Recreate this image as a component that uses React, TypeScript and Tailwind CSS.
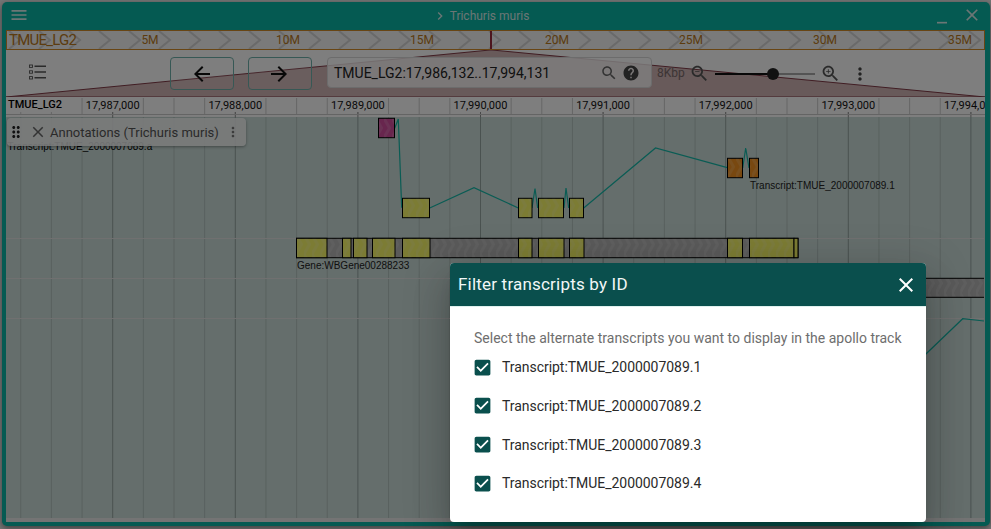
import React from "react";

const P = {
  menu: "M3 18h18v-2H3v2zm0-5h18v-2H3v2zm0-7v2h18V6H3z",
  back: "M20 11H7.83l5.59-5.59L12 4l-8 8 8 8 1.41-1.41L7.83 13H20v-2z",
  forward: "M12 4l-1.41 1.41L16.17 11H4v2h12.17l-5.58 5.59L12 20l8-8z",
  search: "M15.5 14h-.79l-.28-.27C15.41 12.59 16 11.11 16 9.5 16 5.91 13.09 3 9.5 3S3 5.91 3 9.5 5.91 16 9.5 16c1.61 0 3.09-.59 4.23-1.57l.27.28v.79l5 4.99L20.49 19l-4.99-5zm-6 0C7.01 14 5 11.99 5 9.5S7.01 5 9.5 5 14 7.01 14 9.5 11.99 14 9.5 14z",
  help: "M12 2C6.48 2 2 6.48 2 12s4.48 10 10 10 10-4.48 10-10S17.52 2 12 2zm1 17h-2v-2h2v2zm2.07-7.75l-.9.92C13.45 12.9 13 13.5 13 15h-2v-.5c0-1.1.45-2.1 1.17-2.83l1.24-1.26c.37-.36.59-.86.59-1.41 0-1.1-.9-2-2-2s-2 .9-2 2H8c0-2.21 1.79-4 4-4s4 1.79 4 4c0 .88-.36 1.68-.93 2.25z",
  zoomOut: "M15.5 14h-.79l-.28-.27C15.41 12.59 16 11.11 16 9.5 16 5.91 13.09 3 9.5 3S3 5.91 3 9.5 5.91 16 9.5 16c1.61 0 3.09-.59 4.23-1.57l.27.28v.79l5 4.99L20.49 19l-4.99-5zm-6 0C7.01 14 5 11.99 5 9.5S7.01 5 9.5 5 14 7.01 14 9.5 11.99 14 9.5 14zM7 9h5v1H7z",
  zoomIn: "M15.5 14h-.79l-.28-.27C15.41 12.59 16 11.11 16 9.5 16 5.91 13.09 3 9.5 3S3 5.91 3 9.5 5.91 16 9.5 16c1.61 0 3.09-.59 4.23-1.57l.27.28v.79l5 4.99L20.49 19l-4.99-5zm-6 0C7.01 14 5 11.99 5 9.5S7.01 5 9.5 5 14 7.01 14 9.5 11.99 14 9.5 14zM12 10h-2v2H9v-2H7V9h2V7h1v2h2v1z",
  more: "M12 8c1.1 0 2-.9 2-2s-.9-2-2-2-2 .9-2 2 .9 2 2 2zm0 2c-1.1 0-2 .9-2 2s.9 2 2 2 2-.9 2-2-.9-2-2-2zm0 6c-1.1 0-2 .9-2 2s.9 2 2 2 2-.9 2-2-.9-2-2-2z",
  close: "M19 6.41 17.59 5 12 10.59 6.41 5 5 6.41 10.59 12 5 17.59 6.41 19 12 13.41 17.59 19 19 17.59 13.41 12z",
  minimize: "M6 19h12v2H6z",
  chevron: "M8.59 16.59 13.17 12 8.59 7.41 10 6l6 6-6 6z",
  drag: "M11 18c0 1.1-.9 2-2 2s-2-.9-2-2 .9-2 2-2 2 .9 2 2zm-2-8c-1.1 0-2 .9-2 2s.9 2 2 2 2-.9 2-2-.9-2-2-2zm0-6c-1.1 0-2 .9-2 2s.9 2 2 2 2-.9 2-2-.9-2-2-2zm6 4c1.1 0 2-.9 2-2s-.9-2-2-2-2 .9-2 2 .9 2 2 2zm0 2c-1.1 0-2 .9-2 2s.9 2 2 2 2-.9 2-2-.9-2-2-2zm0 6c-1.1 0-2 .9-2 2s.9 2 2 2 2-.9 2-2-.9-2-2-2z",
  check: "M19 3H5c-1.11 0-2 .9-2 2v14c0 1.1.89 2 2 2h14c1.11 0 2-.9 2-2V5c0-1.1-.89-2-2-2zm-9 14l-5-5 1.41-1.41L10 14.17l7.59-7.59L19 8l-9 9z",
};

function Icon({ d, className }: { d: string; className: string }) {
  return (
    <svg viewBox="0 0 24 24" fill="currentColor" className={className}>
      <path d={d} />
    </svg>
  );
}

const TICK0 = 112.7;
const STEP = 122.6;
const majors = Array.from({ length: 8 }, (_, i) => TICK0 + i * STEP);
const allTicks = Array.from({ length: 33 }, (_, i) => TICK0 - STEP + (i * STEP) / 4).filter((x) => x > 6 && x < 985);

const Overview = () => {
  const labels: [string, number][] = [["5M", 150], ["10M", 288], ["15M", 422], ["20M", 557], ["25M", 691], ["30M", 825], ["35M", 960]];
  const chev = Array.from({ length: 33 }, (_, i) => 9 + i * 30);
  return (
    <div className="relative h-[20px] shrink-0 overflow-hidden border border-[#d08a28] bg-[#f4f4f4]">
      <svg viewBox="7 31 977 18" className="block w-full h-full">
        {chev.map((x) => (
          <polyline key={x} points={`${x},31 ${x + 11},40 ${x},49`} fill="none" stroke="#d4d4d4" strokeWidth="2" />
        ))}
        {labels.map(([t, x]) => (
          <text key={t} x={x} y="44" textAnchor="middle" fontSize="12" fill="#b87820" fontFamily="Roboto, sans-serif">{t}</text>
        ))}
        <text x="9" y="45" fontSize="15" fill="#b87820" fontFamily="Roboto, sans-serif" textLength="68">TMUE_LG2</text>
        <rect x="490" y="31" width="2" height="18" fill="#9a2a3a" />
      </svg>
    </div>
  );
};

const NavRow = () => (
  <div className="relative h-[47px] shrink-0 flex items-start bg-[#fcfcfc] font-['Roboto',sans-serif]">
    <svg viewBox="6 50 979 47" className="absolute inset-0 w-full h-full">
      <polygon points="6,97 490,50 492,50 985,97" fill="#d0b4b4" stroke="#803a46" strokeWidth="1" />
    </svg>
    <div className="relative flex items-start w-full">
      <svg viewBox="0 0 24 24" className="w-[24px] h-[24px] ml-[20px] mt-[10px] text-[#555]" fill="none" stroke="currentColor">
        <rect x="3.5" y="5" width="3" height="2.4" strokeWidth="0.9" />
        <rect x="3.5" y="10.8" width="3" height="2.4" strokeWidth="0.9" />
        <rect x="3.5" y="16.6" width="3" height="2.4" strokeWidth="0.9" />
        <path d="M8.5 6.2H20M8.5 12H20M8.5 17.8H20" strokeWidth="1.5" />
      </svg>
      <button className="ml-[120px] mt-[7px] w-[64px] h-[33px] flex items-center justify-center rounded-[4px] border border-[#6fb0aa] bg-white/10 text-[#111]">
        <Icon d={P.back} className="w-[24px] h-[24px] -ml-[1px]" />
      </button>
      <button className="ml-[14px] mt-[7px] w-[64px] h-[33px] flex items-center justify-center rounded-[4px] border border-[#6fb0aa] bg-white/10 text-[#111]">
        <Icon d={P.forward} className="w-[24px] h-[24px] -ml-[2px]" />
      </button>
      <div className="ml-[15px] mt-[7px] w-[325px] h-[31px] flex items-center rounded-[4px] border border-[#d8d8d8] bg-white/80 pl-[6px]">
        <span className="text-[14px] leading-none text-[#222] flex-1">TMUE_LG2:17,986,132..17,994,131</span>
        <Icon d={P.search} className="w-[18px] h-[18px] text-[#666]" />
        <Icon d={P.help} className="w-[18px] h-[18px] ml-[4px] mr-[11px] text-[#444]" />
      </div>
      <span className="ml-[5px] mt-[15px] w-[27px] text-[12px] leading-[16px] text-[#7a6a6a]">8Kbp</span>
      <Icon d={P.zoomOut} className="w-[21px] h-[21px] ml-[5px] mt-[13px] text-[#555]" />
      <div className="relative ml-[5px] mt-[23px] w-[100px] h-[2px] bg-[#a8a8a8]">
        <div className="h-full w-[58px] bg-[#111]" />
        <div className="absolute left-[52px] top-[-5px] w-[12px] h-[12px] rounded-full bg-[#222]" />
      </div>
      <Icon d={P.zoomIn} className="w-[21px] h-[21px] ml-[4.5px] mt-[13px] text-[#555]" />
      <Icon d={P.more} className="w-[20px] h-[20px] ml-[9.5px] mt-[14px] text-[#444]" />
    </div>
  </div>
);

const Ruler = () => (
  <div className="h-[20px] shrink-0 bg-[#fcfcfc]">
    <svg viewBox="6 97 979 20" className="block w-full h-full" fontFamily="Roboto, sans-serif">
      {allTicks.map((x) => (
        <line key={x} x1={x} x2={x} y1="98" y2="114" stroke="#cccccc" />
      ))}
      {majors.map((x) => (
        <g key={x}>
          <rect x={x - 29} y="98" width="58" height="14" fill="#fcfcfc" />
          <line x1={x} x2={x} y1="112" y2="117" stroke="#909090" />
        </g>
      ))}
      {["17,987,000", "17,988,000", "17,989,000", "17,990,000", "17,991,000", "17,992,000", "17,993,000", "17,994,000"].map((t, i) => (
        <text key={t} x={majors[i]} y="109" textAnchor="middle" fontSize="11" fill="#111">{t}</text>
      ))}
      <rect x="6" y="98" width="58" height="14" fill="#fcfcfc" />
      <text x="8" y="108" fontSize="11" fontWeight="500" fill="#000">TMUE_LG2</text>
      <line x1="6" x2="985" y1="114.5" y2="114.5" stroke="#c8c8c8" />
    </svg>
  </div>
);

const Box = ({ x1, x2, y, fill }: { x1: number; x2: number; y: number; fill: string }) => (
  <g>
    <rect x={x1} y={y} width={x2 - x1} height="19.4" fill={fill} stroke="#000" strokeWidth="1" />
    <rect x={x1 + 0.5} y={y + 0.5} width={x2 - x1 - 1} height="18.4" fill="url(#chev)" />
  </g>
);

const Tracks = () => {
  const Y = "#f8f868";
  const cds: [number, number][] = [
    [296.5, 327], [342.5, 351], [353.5, 367], [372.5, 395], [402.5, 430], [518.5, 532], [538.5, 564], [569.5, 584], [727.5, 742.5], [749.5, 794],
  ];
  return (
    <svg viewBox="6 117 979 401" className="block w-full h-full" fontFamily="'Liberation Sans', sans-serif">
      <defs>
        <pattern id="chev" width="8" height="19.4" patternUnits="userSpaceOnUse" y="118.3">
          <polyline points="0,0 5.5,9.7 0,19.4" fill="none" stroke="#fff" strokeOpacity="0.14" strokeWidth="3" />
        </pattern>
      </defs>
      <rect x="6" y="117" width="979" height="401" fill="#cadcd8" />
      {allTicks.map((x) => (
        <line key={x} x1={x} x2={x} y1="117" y2="518" stroke={majors.some((m) => Math.abs(m - x) < 0.1) ? "#94a4a0" : "#b2c2be"} />
      ))}
      {[238.5, 278.5, 318.5].map((y) => (
        <line key={y} x1="6" x2="984" y1={y} y2={y} stroke="#e0e0e0" strokeWidth="1" />
      ))}
      <g fill="none" stroke="#14b8a8" strokeWidth="1.2">
        <polyline points="394.7,128.3 398.3,119 401.7,207.7" />
        <polyline points="429.7,208 474,187.7 518.3,208" />
        <polyline points="532,208 535,188.5 537.7,208" />
        <polyline points="564,208 566,188 568.7,208" />
        <polyline points="583.7,208 655.5,148 727.3,167.7" />
        <polyline points="742.7,168 745.7,148 749,168" />
        <polyline points="880,398 962.7,318.7 984,321" />
      </g>
      <Box x1={378.5} x2={394.5} y={118.3} fill="#d04c9c" />
      <Box x1={402.5} x2={429.5} y={198.3} fill={Y} />
      <Box x1={518.5} x2={532} y={198.3} fill={Y} />
      <Box x1={538.5} x2={563.5} y={198.3} fill={Y} />
      <Box x1={569.5} x2={583.5} y={198.3} fill={Y} />
      <Box x1={727.5} x2={742.5} y={158.3} fill="#f09020" />
      <Box x1={749.5} x2={758.5} y={158.3} fill="#f09020" />
      <Box x1={296.5} x2={798} y={238.3} fill="#b4b4b4" />
      {cds.map(([a, b]) => (
        <Box key={a} x1={a} x2={b} y={238.3} fill={Y} />
      ))}
      <rect x="794" y="238.3" width="4" height="19.4" fill={Y} stroke="#000" />
      <rect x="900" y="278.3" width="84" height="19" fill="#b4b4b4" />
      <rect x="900" y="278.3" width="84" height="19" fill="url(#chev)" />
      <path d="M900 278.3H984M900 297.3H984" stroke="#000" strokeWidth="1" />
      <text x="750" y="188.5" fontSize="10" fill="#222">Transcript:TMUE_2000007089.1</text>
      <text x="297" y="268.5" fontSize="10" fill="#222">Gene:WBGene00288233</text>
      <text x="7.5" y="150" fontSize="10" fill="#000">Transcript:TMUE_2000007089.a</text>
    </svg>
  );
};

const Panel = () => (
  <div className="absolute left-[1px] top-[1px] w-[239px] h-[28px] flex items-center rounded-[4px] bg-[#f4f6f6]/90 shadow-[0_1px_3px_rgba(0,0,0,0.35)] font-['Roboto',sans-serif]">
    <Icon d={P.drag} className="w-[18px] h-[18px] ml-0 text-[#222]" />
    <Icon d={P.close} className="w-[18px] h-[18px] ml-[3.5px] text-[#666]" />
    <span className="ml-[3.5px] text-[13px] leading-none text-[#555] whitespace-nowrap">Annotations (Trichuris muris)</span>
    <Icon d={P.more} className="w-[16px] h-[16px] ml-[6px] text-[#777]" />
  </div>
);

const Dialog = () => (
  <div className="absolute left-[450px] top-[263px] w-[476px] h-[259px] rounded-[4px] overflow-hidden bg-white shadow-[0_11px_15px_-7px_rgba(0,0,0,0.2),0_24px_38px_3px_rgba(0,0,0,0.14),0_9px_46px_8px_rgba(0,0,0,0.12)] font-['Roboto',sans-serif]">
    <div className="h-[44px] flex items-center justify-between bg-[#0a4f4d] pl-[8px] pr-[8px] border-b border-[#dff0ee]">
      <span className="text-[17px] leading-none tracking-[0.2px] text-[#f2f7f7]">Filter transcripts by ID</span>
      <Icon d={P.close} className="w-[24px] h-[24px] text-white" />
    </div>
    <div className="pt-[21px] pl-[24px]">
      <p className="text-[14px] leading-[20px] text-[#6e6e6e] whitespace-nowrap">Select the alternate transcripts you want to display in the apollo track</p>
      {[1, 2, 3, 4].map((n) => (
        <div key={n} className="h-[38.67px] flex items-center">
          <Icon d={P.check} className="w-[21px] h-[21px] ml-[-2.5px] text-[#0a4f4d]" />
          <span className="ml-[9.5px] text-[14px] leading-[20px] tracking-[-0.04px] text-[#2a2a2a]">Transcript:TMUE_2000007089.{n}</span>
        </div>
      ))}
    </div>
  </div>
);

export default function App() {
  return (
    <div className="relative w-[991px] h-[529px] overflow-hidden bg-[#ececec] pt-[2px] pl-[2px] font-['Roboto',sans-serif]">
      <div className="w-[988px] h-[524px] flex flex-col rounded-[5px] bg-[#0ab4a4] pl-[4px] pr-[5px] pb-[4px] shadow-[0_2px_6px_rgba(0,0,0,0.5)]">
        <div className="h-[28px] shrink-0 relative flex items-center justify-center text-[#d8ecea]">
          <Icon d={P.menu} className="absolute left-[3px] top-[3px] w-[20px] h-[20px]" />
          <Icon d={P.chevron} className="w-[16px] h-[16px] mr-[2px]" />
          <span className="text-[12px] leading-none mr-[30px]">Trichuris muris</span>
          <Icon d={P.minimize} className="absolute right-[33px] top-[4px] w-[20px] h-[20px]" />
          <Icon d={P.close} className="absolute right-[3px] top-[3px] w-[20px] h-[20px]" />
        </div>
        <Overview />
        <NavRow />
        <Ruler />
        <div className="relative flex-1 min-h-0 flex flex-col bg-[#e8e8e8]">
          <div className="relative h-[401px] shrink-0">
            <Tracks />
            <Panel />
          </div>
        </div>
      </div>
      <div className="absolute inset-0 bg-black/50" />
      <Dialog />
    </div>
  );
}
